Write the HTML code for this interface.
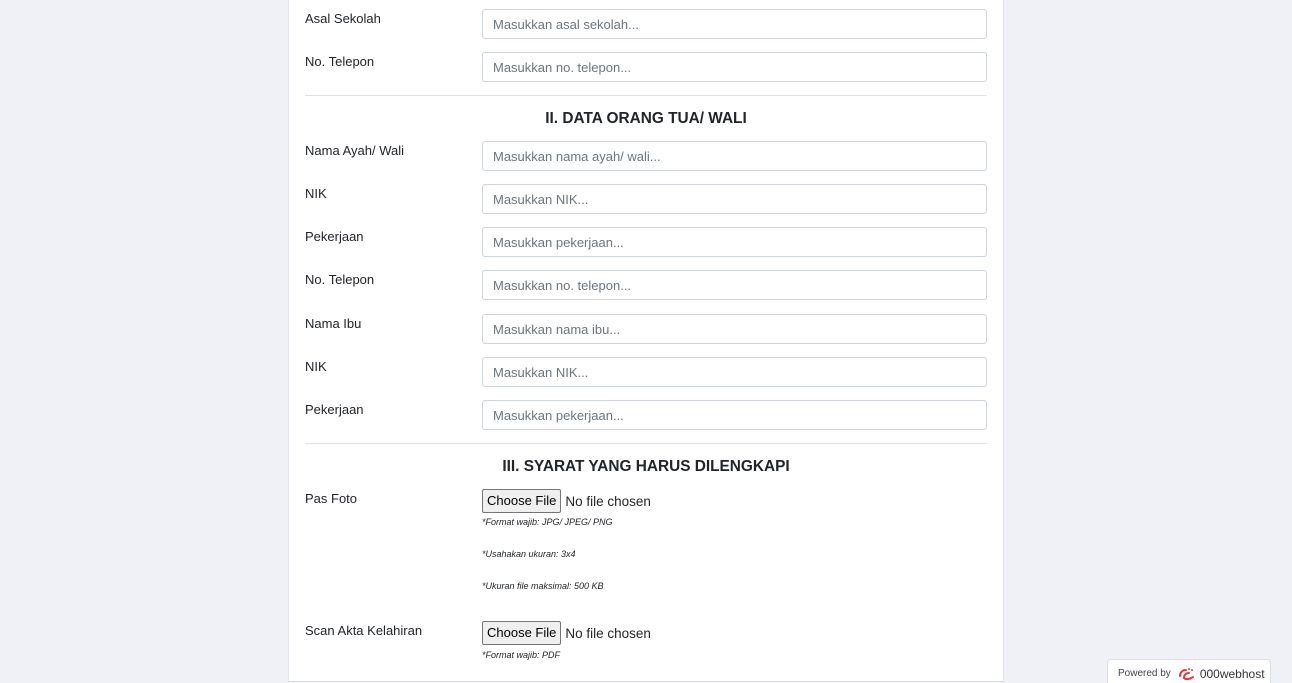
<!DOCTYPE html>
<html><head><meta charset="utf-8"><style>
*{box-sizing:border-box;margin:0;padding:0}
body{width:1292px;height:683px;overflow:hidden;background:#f0f1f6;font-family:"Segoe UI","Liberation Sans",sans-serif;color:#212529;position:relative}
.card{position:absolute;left:288px;top:0;width:716px;height:682px;background:#fff;border-left:1px solid #e3e4ea;border-right:1px solid #e3e4ea;border-bottom:1px solid #dcdde3}
.l{position:absolute;left:305px;font-size:13px}
.i{position:absolute;left:482px;width:505px;height:30px;border:1px solid #ced4da;border-radius:3px;font-size:13px;color:#6c757d;padding:7px 10px;line-height:16px;background:#fff}
.hr{position:absolute;left:305px;width:682px;height:1px;background:#dee2e6}
.t{position:absolute;left:305px;width:682px;text-align:center;font-size:15.4px;font-weight:bold;color:#212529}
.f{position:absolute;left:482px;font-size:13.5px;height:24px;display:flex;align-items:center}
.f span.b{border:1px solid #767676;background:#efefef;border-radius:2px;padding:1px 4px;height:24px;line-height:20px;margin-right:4px;color:#000;font-size:13px}
.s{position:absolute;left:482px;font-size:9px;font-style:italic;color:#212529}
.pw{position:absolute;left:1107px;top:659px;width:164px;height:24px;background:#fff;border:1px solid #ddd;border-bottom:none;border-radius:4px 4px 0 0;font-size:10px;color:#444;padding:4px 0 0 10px;display:flex;align-items:center;height:24px}
</style></head><body>
<div class="card"></div>
<div class="l" style="top:11px">Asal Sekolah</div><div class="i" style="top:9px">Masukkan asal sekolah...</div>
<div class="l" style="top:54px">No. Telepon</div><div class="i" style="top:52px">Masukkan no. telepon...</div>
<div class="hr" style="top:95px"></div>
<div class="t" style="top:110px">II. DATA ORANG TUA/ WALI</div>
<div class="l" style="top:143px">Nama Ayah/ Wali</div><div class="i" style="top:141px">Masukkan nama ayah/ wali...</div>
<div class="l" style="top:186px">NIK</div><div class="i" style="top:184px">Masukkan NIK...</div>
<div class="l" style="top:229px">Pekerjaan</div><div class="i" style="top:227px">Masukkan pekerjaan...</div>
<div class="l" style="top:272px">No. Telepon</div><div class="i" style="top:270px">Masukkan no. telepon...</div>
<div class="l" style="top:316px">Nama Ibu</div><div class="i" style="top:314px">Masukkan nama ibu...</div>
<div class="l" style="top:359px">NIK</div><div class="i" style="top:357px">Masukkan NIK...</div>
<div class="l" style="top:402px">Pekerjaan</div><div class="i" style="top:400px">Masukkan pekerjaan...</div>
<div class="hr" style="top:443px"></div>
<div class="t" style="top:458px">III. SYARAT YANG HARUS DILENGKAPI</div>
<div class="l" style="top:491px">Pas Foto</div>
<div class="f" style="top:489px"><span class="b">Choose File</span>No file chosen</div>
<div class="s" style="top:517px">*Format wajib: JPG/ JPEG/ PNG</div>
<div class="s" style="top:549px">*Usahakan ukuran: 3x4</div>
<div class="s" style="top:581px">*Ukuran file maksimal: 500 KB</div>
<div class="l" style="top:623px">Scan Akta Kelahiran</div>
<div class="f" style="top:621px"><span class="b">Choose File</span>No file chosen</div>
<div class="s" style="top:650px">*Format wajib: PDF</div>
<div class="pw">Powered by <svg width="20" height="14" viewBox="0 0 20 14" style="margin:0 3px 0 6px"><path d="M9 3 C5 3 3 6 3 9 M12 6 C9 6 7 8 7 11 C9 13 13 12 16 10" stroke="#e8343a" stroke-width="2" fill="none" stroke-linecap="round"/><circle cx="12" cy="2" r="1" fill="#e8343a"/><circle cx="15" cy="3" r="1" fill="#e8343a"/></svg><span style="font-size:12px;color:#333">000webhost</span></div>
</body></html>
